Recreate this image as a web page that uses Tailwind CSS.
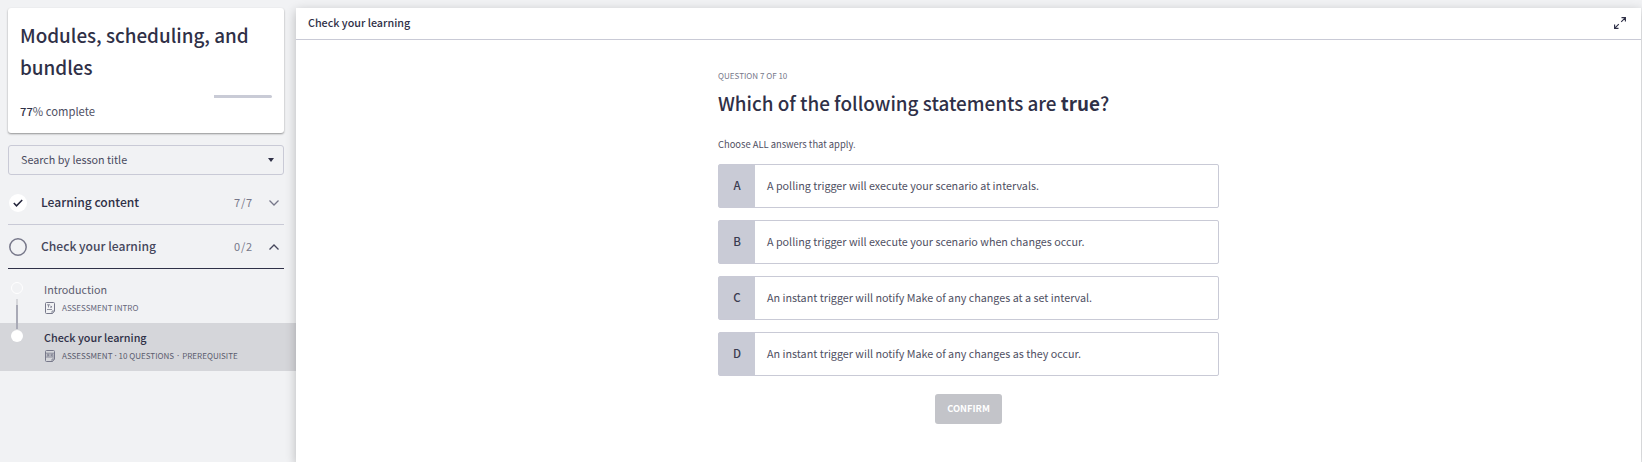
<!DOCTYPE html>
<html lang="en"><head><meta charset="utf-8"><title>Check your learning</title>
<script src="https://cdn.jsdelivr.net/npm/@tailwindcss/browser@4"></script></head>
<body class="h-[462px] overflow-hidden bg-[#f1f2f4] font-['Noto_Sans_CJK_SC',sans-serif] text-[#2f3047]">
<div class="flex h-full">
  <aside class="w-[296px] shrink-0 pt-2">
    <section class="mx-2 h-[125px] w-[276px] rounded-[3px] bg-white px-3 pt-[11px] shadow-[0_1px_2px_rgba(0,0,0,0.4)]">
      <h1 class="text-[18.85px] leading-8 font-medium">Modules, scheduling, and<br>bundles</h1>
      <div class="mt-3 flex h-[3px] justify-end"><div class="w-[58px] rounded-r-full bg-[#c9cbd6]"></div></div>
      <p class="mt-[5px] text-[11.25px] leading-4 text-[#4f5063]"><b class="font-medium text-[#2f3047]">77</b>% complete</p>
    </section>
    <div class="mt-3 ml-2 flex h-[30px] w-[276px] items-center justify-between rounded-[3px] border border-[#c9cad6] pr-[9px] pl-3 text-[10.78px] text-[#4a4b60]">
      <span class="pb-0.5">Search by lesson title</span>
      <svg class="h-1 w-1.5 fill-[#2f3047]" viewBox="0 0 6 4"><path d="M0 0h6L3 4z"/></svg>
    </div>
    <nav class="mt-[6px] ml-2 w-[276px]">
      <div class="flex h-11 items-center border-b border-[#c9cad6] pl-px text-[12.1px]">
        <span class="flex size-[18px] items-center justify-center rounded-full bg-white"><svg class="h-2 w-2.5 fill-none stroke-[#23243a]" viewBox="0 0 10 8" stroke-width="1.5"><path d="M.8 4l2.7 2.8L9.2 1"/></svg></span>
        <span class="ml-[14px] font-medium">Learning content</span>
        <span class="ml-auto text-[11px] tracking-[0.8px] text-[#77788a]">7/7</span>
        <svg class="mr-[5px] ml-4 h-[6px] w-[10px] fill-none stroke-[#77788a]" viewBox="0 0 10 6" stroke-width="1.3"><path d="M.5 .5L5 5L9.5 .5"/></svg>
      </div>
      <div class="flex h-11 items-center border-b border-[#2f3047] pl-px text-[12.1px]">
        <svg class="size-[18px] fill-none stroke-[#77788a]" viewBox="0 0 18 18" stroke-width="1.5"><circle cx="9" cy="9" r="8.2"/></svg>
        <span class="ml-[14px] font-medium text-[#45465b]">Check your learning</span>
        <span class="ml-auto text-[11px] tracking-[0.8px] text-[#77788a]">0/2</span>
        <svg class="mr-[5px] ml-4 h-[6px] w-[10px] fill-none stroke-[#45465b]" viewBox="0 0 10 6" stroke-width="1.3"><path d="M.5 5.5L5 1L9.5 5.5"/></svg>
      </div>
    </nav>
    <div class="mt-[6px]">
      <div class="flex h-12 pl-[11px]">
        <div class="flex w-3 flex-col items-center pt-[7px]">
          <span class="size-3 shrink-0 rounded-full border border-white"></span>
          <span class="mt-[5px] h-[6px] w-0.5 shrink-0 bg-[#d5d6da]"></span>
          <span class="h-[18px] w-0.5 shrink-0 bg-[#a9aab6]"></span>
        </div>
        <div class="ml-[21px] pt-[7px]">
          <p class="text-[10.75px] leading-4 text-[#5b5c6e]">Introduction</p>
          <p class="mt-0.5 flex h-4 items-center text-[8.05px] leading-4 text-[#66677a]">
            <svg class="mr-[7px] ml-px h-3 w-[10px] shrink-0 fill-none stroke-[#77788a]" viewBox="0 0 10 12"><path d="M1.500 .5h7q1 0 1 1v7.500l-2 2.500h-6q-1 0-1-1v-9q0-1 1-1z"/><path d="M7 11.500V9h2.500M2 2.800h3M3.500 2.800v2.700M5.300 4l1.700 1.700M7 4L5.300 5.700M2 7.500h5" stroke-width=".8"/></svg>
            ASSESSMENT INTRO</p>
        </div>
      </div>
      <div class="flex h-12 bg-[#d5d6da] pl-[11px]">
        <div class="flex w-3 flex-col items-center">
          <span class="h-[6px] w-0.5 shrink-0 bg-[#a9aab6]"></span>
          <span class="mt-px size-3 shrink-0 rounded-full bg-white"></span>
        </div>
        <div class="ml-[21px] pt-[6px]">
          <p class="text-[10.8px] leading-4 font-medium">Check your learning</p>
          <p class="mt-[3px] flex h-4 items-center text-[8.05px] leading-4 text-[#5b5c6e]">
            <svg class="mr-[7px] ml-px h-3 w-[10px] shrink-0 fill-none stroke-[#77788a]" viewBox="0 0 10 12"><path d="M1.500 .5h7q1 0 1 1v7.500l-2 2.500h-6q-1 0-1-1v-9q0-1 1-1z"/><path d="M7 11.500V9h2.500M.5 3.200h9M.5 7h9M2.200 4.200v1.800h1.300v-1.800zM5 4v2.200M6.500 4.200h1.500v1.800h-1.500z" stroke-width=".8"/></svg>
            <span>ASSESSMENT</span><span class="w-[6px] text-center font-['Noto_Sans']">·</span><span>10 QUESTIONS</span><span class="w-2 text-center font-['Noto_Sans']">·</span><span>PREREQUISITE</span></p>
        </div>
      </div>
    </div>
  </aside>
  <main class="mt-2 mr-px min-w-0 grow bg-white shadow-[0_3px_10px_rgba(0,0,0,0.24)]">
    <header class="flex h-8 items-center justify-between border-b border-[#c9cad6] pr-[15px] pb-px pl-3 text-[10.75px] font-medium">
      <span>Check your learning</span>
      <svg class="h-3 w-3 fill-none stroke-[#2f3047]" viewBox="0 0 12 12" stroke-width="1.15"><path d="M7.500 .6h3.900v3.900M11.200 .8L7.200 4.800M4.500 11.400H.6V7.500M.8 11.200l4-4"/></svg>
    </header>
    <div class="ml-[422px] w-[501px] pt-7">
      <p class="text-[8.05px] leading-4 text-[#77788a]">QUESTION 7 OF 10</p>
      <h2 class="mt-[3px] text-[18.86px] leading-8 font-medium">Which of the following statements are <b>true</b>?</h2>
      <p class="mt-[17px] text-[9.38px] leading-4 text-[#4f5063]">Choose ALL answers that apply.</p>
      <ol class="mt-3 flex flex-col gap-3 text-[10.75px] text-[#4f5063]">
        <li class="flex h-11 items-center rounded-xs border border-[#c9cad6]"><b class="flex h-full w-9 items-center justify-center bg-[#c9cbd6] text-[11.5px] font-medium text-[#3a3b50]">A</b><span class="ml-3">A polling trigger will execute your scenario at intervals.</span></li>
        <li class="flex h-11 items-center rounded-xs border border-[#c9cad6]"><b class="flex h-full w-9 items-center justify-center bg-[#c9cbd6] text-[11.5px] font-medium text-[#3a3b50]">B</b><span class="ml-3">A polling trigger will execute your scenario when changes occur.</span></li>
        <li class="flex h-11 items-center rounded-xs border border-[#c9cad6]"><b class="flex h-full w-9 items-center justify-center bg-[#c9cbd6] text-[11.5px] font-medium text-[#3a3b50]">C</b><span class="ml-3">An instant trigger will notify Make of any changes at a set interval.</span></li>
        <li class="flex h-11 items-center rounded-xs border border-[#c9cad6]"><b class="flex h-full w-9 items-center justify-center bg-[#c9cbd6] text-[11.5px] font-medium text-[#3a3b50]">D</b><span class="ml-3">An instant trigger will notify Make of any changes as they occur.</span></li>
      </ol>
      <button class="mx-auto mt-[18px] flex h-[30px] w-[67px] items-center justify-center rounded-[3px] bg-[#c3c4c9] text-[9.3px] font-bold text-white">CONFIRM</button>
    </div>
  </main>
</div>
</body></html>
